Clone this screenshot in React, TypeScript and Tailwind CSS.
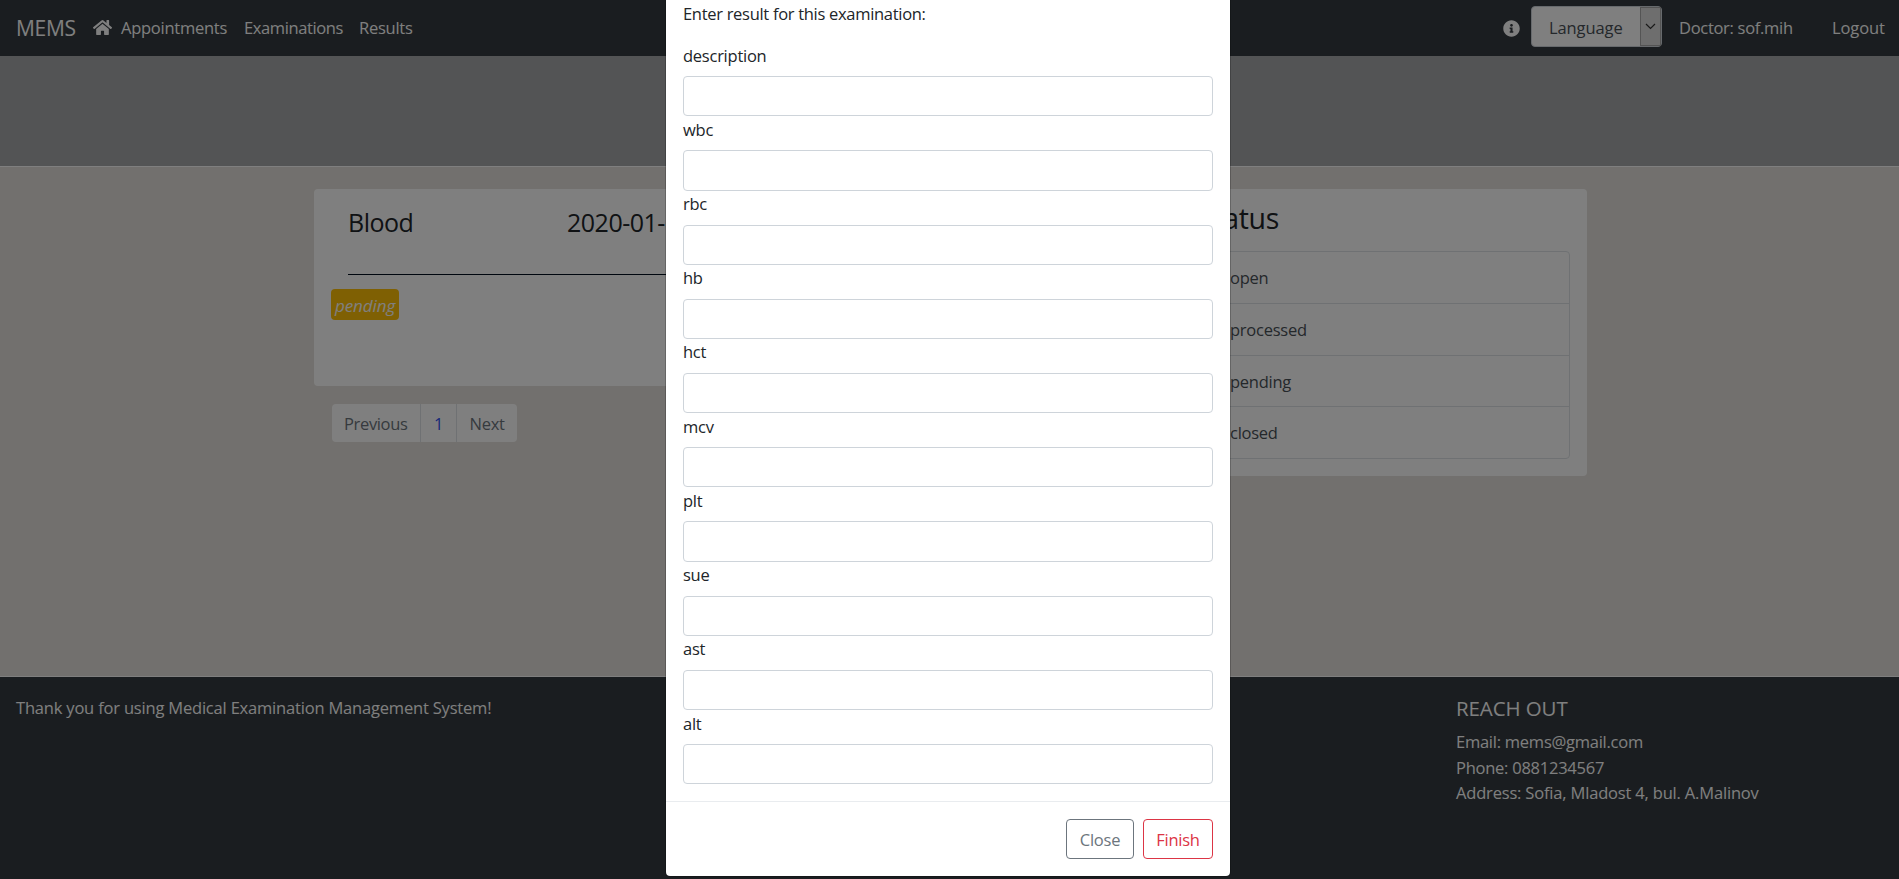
import { FaHome, FaInfoCircle } from "react-icons/fa";

const fields = ["description", "wbc", "rbc", "hb", "hct", "mcv", "plt", "sue", "ast", "alt"];
const statuses = ["open", "processed", "pending", "closed"];

function Navbar() {
  return (
    <nav className="flex h-14 items-center bg-[#343a40] pl-4 pr-[13px] text-white">
      <span className="w-[77px] pt-[2px] text-[21px] tracking-[-0.3px]">MEMS</span>
      <FaHome className="mt-[-1px] mr-[9px] size-[19px]" />
      <div className="flex gap-[17px]">
        <span className="w-[106px]">Appointments</span>
        <span className="w-[98px] tracking-[-0.4px]">Examinations</span>
        <span>Results</span>
      </div>
      <div className="ml-auto flex items-center">
        <FaInfoCircle className="mr-[11px] size-[17px]" />
        <div className="mt-[-3px] mr-[17px] flex h-[41px] w-[131px] items-stretch rounded border border-[#ced4da] bg-white text-[#495057]">
          <span className="flex flex-1 items-center pt-[4px] pl-[17px] tracking-[-0.1px]">Language</span>
          <span className="flex w-[21px] items-center justify-center border border-[#a8a8a8] bg-[#dcdcdc]">
            <svg width="11" height="7" viewBox="0 0 11 7" fill="none" stroke="#333" strokeWidth="1.2">
              <path d="M1 1l4.5 4.5L10 1" />
            </svg>
          </span>
        </div>
        <span className="w-[153px] tracking-[-0.3px]">Doctor: sof.mih</span>
        <span className="w-[54px] tracking-[-0.1px]">Logout</span>
      </div>
    </nav>
  );
}

function ExaminationList() {
  return (
    <section className="w-[833px]">
      <div className="h-[197px] rounded bg-white px-[17px]">
        <div className="mx-[17px] flex h-[86px] border-b border-[#000f1e] pt-[17px] text-[25px] leading-[32px] tracking-[-0.5px] text-[#212529]">
          <h4 className="w-[219px]">Blood</h4>
          <h4>2020-01-</h4>
        </div>
        <span className="mt-[14px] flex h-[31px] w-[68px] items-center rounded bg-[#ffc107] pt-[2px] pl-[4px] text-[17px] tracking-[-0.1px] italic text-white">
          pending
        </span>
      </div>
      <div className="mt-[18px] ml-[18px] flex h-[38px] w-[185px] overflow-hidden rounded bg-white text-[#6c757d]">
        <span className="flex w-[89px] items-center border-r border-[#dee2e6] pt-[2px] pl-[12px] tracking-[-0.35px]">Previous</span>
        <span className="flex w-[36px] items-center justify-center border-r border-[#dee2e6] pt-[2px] text-[#304ff0]">1</span>
        <span className="flex items-center pt-[2px] pl-[12.5px]">Next</span>
      </div>
    </section>
  );
}

function StatusCard() {
  return (
    <section className="h-[287px] w-[406px] rounded bg-white px-[17px] pt-[10px]">
      <h3 className="h-[52px] text-[28.5px] leading-[38px] tracking-[-0.3px] text-[#212529]">Status</h3>
      <ul className="h-[208px] rounded border border-[#dee2e6] text-[#495057]">
        {statuses.map((s) => (
          <li key={s} className="h-[51.8px] border-b border-[#dee2e6] pt-[13px] pl-[31px] leading-[25px] last:border-b-0">
            {s}
          </li>
        ))}
      </ul>
    </section>
  );
}

function Footer() {
  return (
    <footer className="flex flex-1 justify-between border-t border-white bg-[#343a40] pt-[17px] pl-4 text-white">
      <p className="leading-[27px] tracking-[-0.19px]">Thank you for using Medical Examination Management System!</p>
      <div className="w-[443px]">
        <h5 className="mb-[7px] pt-px text-[20.5px] leading-[27px] tracking-[-0.1px]">REACH OUT</h5>
        <p className="leading-[25.5px]">Email: mems@gmail.com</p>
        <p className="leading-[25.5px]">Phone: 0881234567</p>
        <p className="leading-[25.5px] tracking-[-0.18px]">Address: Sofia, Mladost 4, bul. A.Malinov</p>
      </div>
    </footer>
  );
}

function ResultModal() {
  return (
    <div className="absolute inset-0 flex items-start justify-center bg-black/50">
      <div className="mr-[3px] flex h-[877px] w-[566px] flex-col rounded-b-[5px] border border-t-0 border-black/20 bg-white bg-clip-padding text-[#212529]">
        <div className="flex h-[801px] flex-col px-[17px]">
          <p className="h-[43.6px] pt-[1px] leading-[25.5px] tracking-[-0.3px]">Enter result for this examination:</p>
          {fields.map((f) => (
            <label key={f} className="flex h-[74.22px] shrink-0 flex-col">
              <span className="mb-[8px] leading-[24.5px]">{f}</span>
              <input className="h-[40.2px] w-[530px] rounded border border-[#ced4da] bg-white px-3" />
            </label>
          ))}
        </div>
        <div className="flex flex-1 justify-end gap-[9px] border-t border-[#e9ecef] pt-[17px] pr-[17px]">
          <button className="h-[40px] w-[68px] rounded border border-[#6c757d] pt-[2px] tracking-[-0.2px] text-[#6c757d]">Close</button>
          <button className="h-[40px] w-[70px] rounded border border-[#dc3545] pt-[2px] text-[#dc3545]">Finish</button>
        </div>
      </div>
    </div>
  );
}

export default function App() {
  return (
    <div className="relative flex h-[879px] w-full flex-col overflow-hidden bg-[#e4e0dc] font-['Open_Sans',sans-serif] text-[16.5px] tracking-[-0.25px]">
      <Navbar />
      <div className="h-[111px] border-b border-white bg-[#a6a8ab]" />
      <main className="flex h-[509px] justify-between pt-[22px] pr-[312px] pl-[314px]">
        <ExaminationList />
        <StatusCard />
      </main>
      <Footer />
      <ResultModal />
    </div>
  );
}
